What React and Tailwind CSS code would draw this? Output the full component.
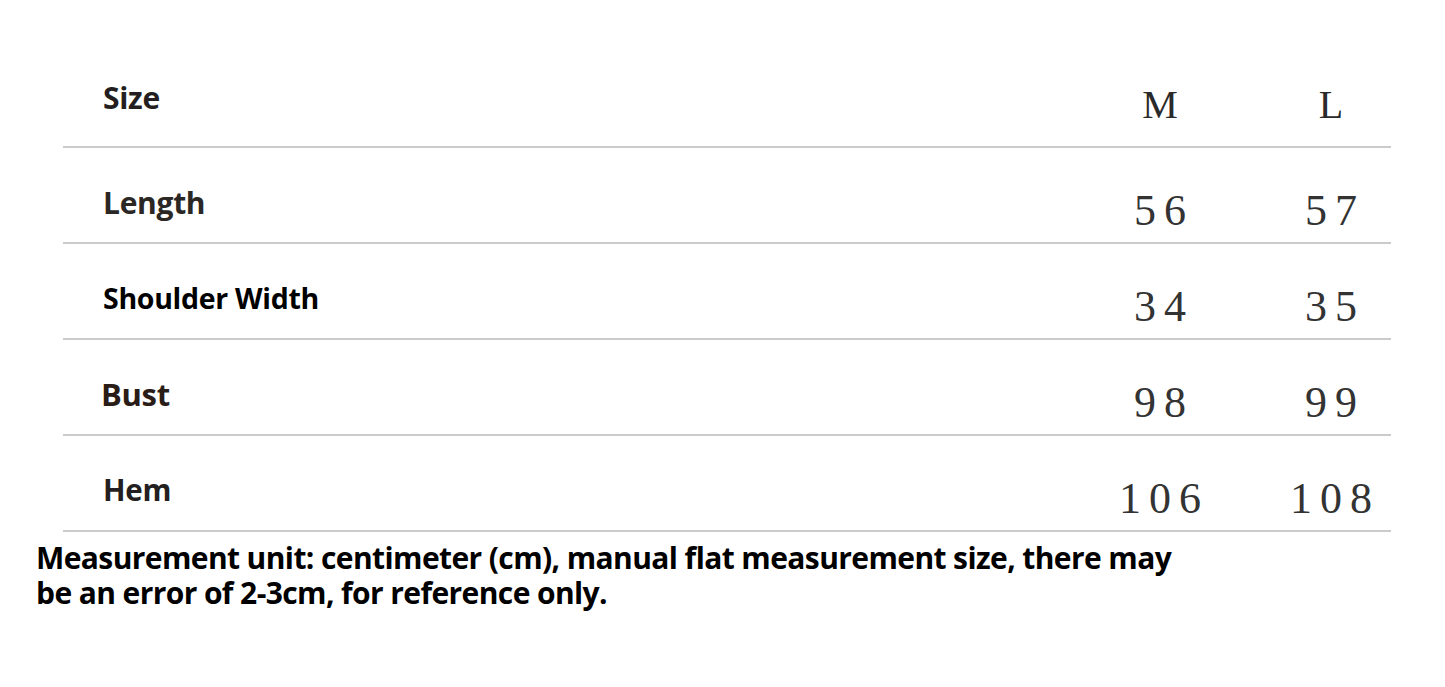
const rows = [
  { label: 'Length', m: '56', l: '57', cls: 'text-[#2b2724] text-[30px]' },
  { label: 'Shoulder Width', m: '34', l: '35', cls: 'text-black text-[28.5px]' },
  { label: 'Bust', m: '98', l: '99', cls: 'text-[#2a1c16] text-[31px] -ml-[2px]' },
  { label: 'Hem', m: '106', l: '108', cls: 'text-[#231f20] text-[29.5px]' },
]

const label = "font-['Open_Sans','Noto_Sans',sans-serif] font-bold tracking-[-0.3px]"
const num =
  "w-[120px] text-center font-['Liberation_Serif','DejaVu_Serif',serif] text-[#333] text-[44px] leading-none tracking-[8px] pl-[8px] pt-[32px]"

export default function App() {
  return (
    <div className="w-[1445px] h-[687px] bg-white overflow-hidden">
      <div className="pt-[52px] pl-[63px] w-[1391px]">
        {/* Header */}
        <div className="h-[96px] flex items-center border-b-2 border-[#cbcbcb]">
          <div className={`flex-1 pl-[40px] pb-[4px] text-[30px] text-[#231f20] ${label}`}>Size</div>
          <div className="w-[120px] text-center pt-[12px] font-['Liberation_Serif','DejaVu_Serif',serif] text-[40px] text-[#2a2a2a]">
            M
          </div>
          <div className="w-[51px]" />
          <div className="w-[120px] text-center pt-[12px] font-['Liberation_Serif','DejaVu_Serif',serif] text-[40px] text-[#2a2a2a]">
            L
          </div>
        </div>

        {/* Rows */}
        {rows.map(r => (
          <div key={r.label} className="h-[96px] flex items-center border-b-2 border-[#cbcbcb]">
            <div className={`flex-1 pl-[40px] pt-[14px] ${label} ${r.cls}`}>{r.label}</div>
            <div className={num}>{r.m}</div>
            <div className="w-[51px]" />
            <div className={num}>{r.l}</div>
          </div>
        ))}
      </div>

      {/* Note */}
      <div className="pl-[36px] pt-[8px] font-['Open_Sans','Noto_Sans',sans-serif] text-[30px] leading-[35px] font-bold text-black tracking-[-0.6px]">
        <p>Measurement unit: centimeter (cm), manual flat measurement size, there may</p>
        <p>be an error of 2-3cm, for reference only.</p>
      </div>
    </div>
  )
}
